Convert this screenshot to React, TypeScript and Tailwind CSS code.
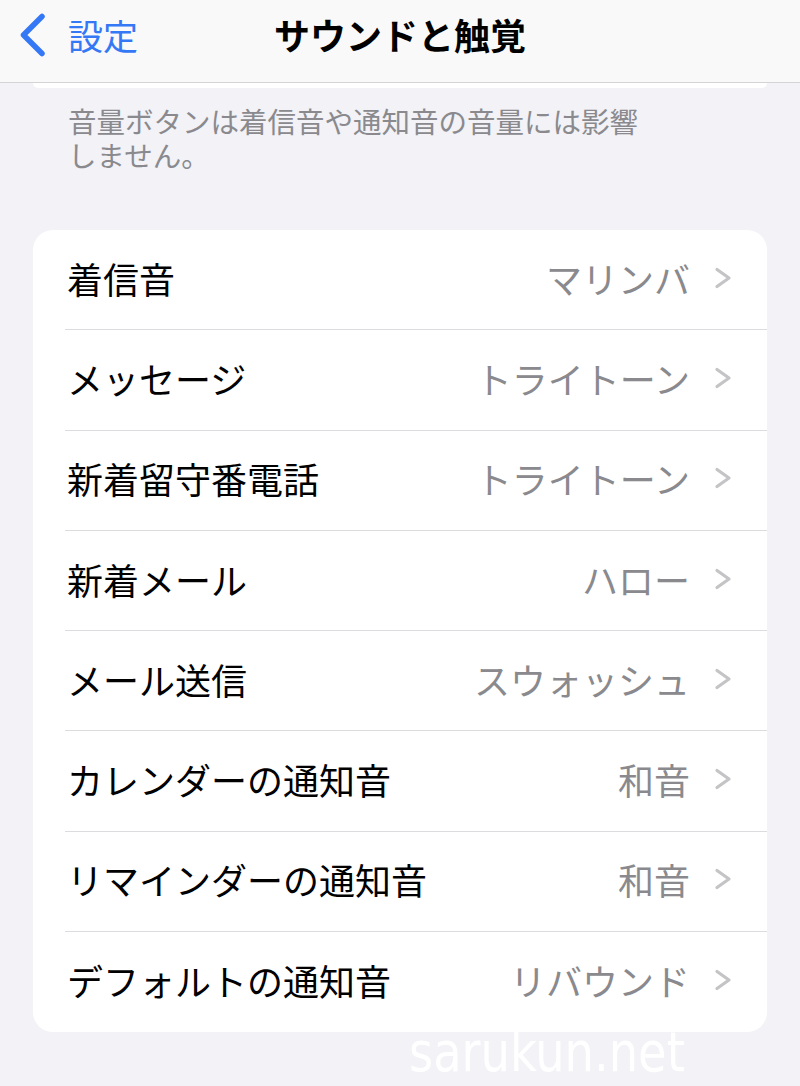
const rows: [string, string][] = [
  ["着信音", "マリンバ"],
  ["メッセージ", "トライトーン"],
  ["新着留守番電話", "トライトーン"],
  ["新着メール", "ハロー"],
  ["メール送信", "スウォッシュ"],
  ["カレンダーの通知音", "和音"],
  ["リマインダーの通知音", "和音"],
  ["デフォルトの通知音", "リバウンド"],
];

function Chevron() {
  return (
    <svg width="18" height="22" viewBox="0 0 18 22" fill="none" className="shrink-0">
      <path d="M3 2.5 L15 11 L3 19.5" stroke="#c4c4c7" strokeWidth="3.2" strokeLinecap="round" strokeLinejoin="round" />
    </svg>
  );
}

function Row(props: { label: string; value: string; last: boolean }) {
  return (
    <div className="pl-[32px]">
      <div
        className={
          "flex h-[100.3px] items-center pb-[4px] pl-[2px] pr-[35px] " +
          (props.last ? "" : "border-b border-[#dcdce0]")
        }
      >
        <span className="flex-1 text-[36px] leading-none text-black">{props.label}</span>
        <span className="mr-[24px] text-[36px] leading-none text-[#8a8a8e]">{props.value}</span>
        <Chevron />
      </div>
    </div>
  );
}

export default function App() {
  return (
    <div
      className="relative min-h-[1086px] w-[800px] overflow-hidden bg-[#f2f2f7]"
      style={{ fontFamily: '"Noto Sans CJK JP", "Noto Sans", sans-serif' }}
    >
      <div className="relative flex h-[83px] items-center border-b border-[#d4d4d6] bg-[#f9f9f9] pb-[13px]">
        <div className="flex items-center pl-[19px]">
          <svg width="27" height="44" viewBox="0 0 27 44" fill="none">
            <path d="M23 3.5 L4.5 22 L23 40.5" stroke="#3478f6" strokeWidth="5.5" strokeLinecap="round" strokeLinejoin="round" />
          </svg>
          <span className="ml-[22px] text-[35px] leading-none text-[#3478f6]">設定</span>
        </div>
        <span className="absolute left-0 right-0 top-[16px] text-center text-[36px] font-bold leading-none text-black">
          サウンドと触覚
        </span>
      </div>
      <div className="mx-[33px] h-[5px] rounded-b-[6px] bg-white" />

      <div className="px-[68px] pt-[16px] text-[28.5px] leading-[34px] text-[#8a8a8e]">
        <div>音量ボタンは着信音や通知音の音量には影響</div>
        <div>しません。</div>
      </div>

      <div className="mx-[33px] mt-[58px] overflow-hidden rounded-[20px] bg-white">
        {rows.map(([label, value], i) => (
          <Row key={label} label={label} value={value} last={i === rows.length - 1} />
        ))}
      </div>

      <div
        className="absolute left-[409px] top-[1024px] origin-left scale-x-[0.92] text-[56px] font-light leading-none text-white"
        style={{ fontFamily: '"DejaVu Sans Condensed", "Liberation Sans Narrow", sans-serif' }}
      >
        sarukun.net
      </div>
    </div>
  );
}
